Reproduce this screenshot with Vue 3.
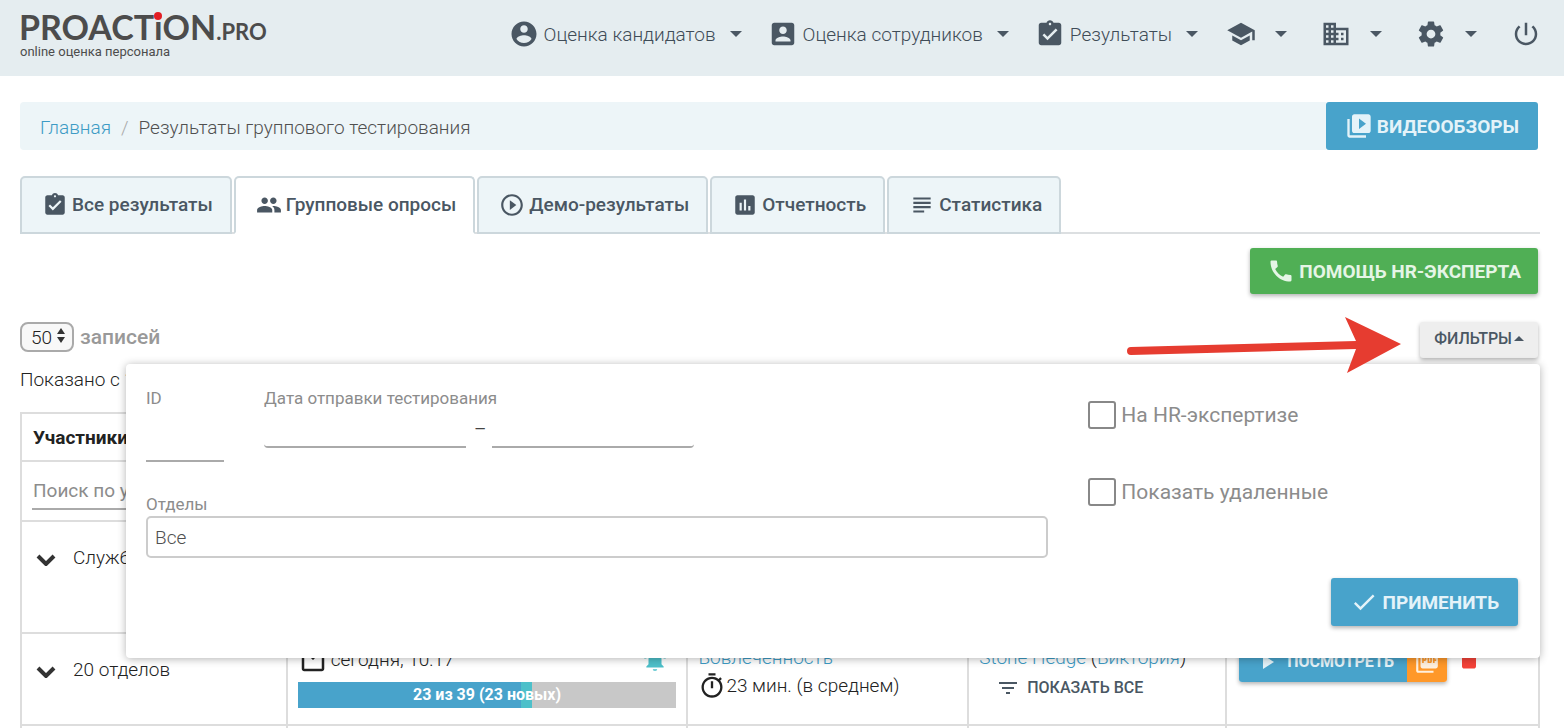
<script setup>
import { ref } from 'vue'

const icons = {
  accountCircle: 'M12 2C6.48 2 2 6.48 2 12s4.48 10 10 10 10-4.48 10-10S17.52 2 12 2zm0 3c1.66 0 3 1.34 3 3s-1.34 3-3 3-3-1.34-3-3 1.34-3 3-3zm0 14.2c-2.5 0-4.71-1.28-6-3.22.03-1.99 4-3.08 6-3.08 1.99 0 5.97 1.09 6 3.08-1.29 1.94-3.5 3.22-6 3.22z',
  accountBox: 'M3 5v14c0 1.1.89 2 2 2h14c1.1 0 2-.9 2-2V5c0-1.1-.9-2-2-2H5c-1.11 0-2 .9-2 2zm12 4c0 1.66-1.34 3-3 3s-3-1.34-3-3 1.34-3 3-3 3 1.34 3 3zm-9 8c0-2 4-3.1 6-3.1s6 1.1 6 3.1v1H6v-1z',
  assignment: 'M19 3h-4.18C14.4 1.84 13.3 1 12 1c-1.3 0-2.4.84-2.82 2H5c-1.1 0-2 .9-2 2v14c0 1.1.9 2 2 2h14c1.1 0 2-.9 2-2V5c0-1.1-.9-2-2-2zm-7 0c.55 0 1 .45 1 1s-.45 1-1 1-1-.45-1-1 .45-1 1-1zm-2 14l-4-4 1.41-1.41L10 14.17l6.59-6.59L18 9l-8 8z',
  school: 'M5 13.18v4L12 21l7-3.82v-4L12 17l-7-3.82zM12 3L1 9l11 6 9-4.91V17h2V9L12 3z',
  business: 'M12 7V3H2v18h20V7H12zM6 19H4v-2h2v2zm0-4H4v-2h2v2zm0-4H4V9h2v2zm0-4H4V5h2v2zm4 12H8v-2h2v2zm0-4H8v-2h2v2zm0-4H8V9h2v2zm0-4H8V5h2v2zm10 12h-8v-2h2v-2h-2v-2h2v-2h-2V9h8v10zm-2-8h-2v2h2v-2zm0 4h-2v2h2v-2z',
  settings: 'M19.43 12.98c.04-.32.07-.64.07-.98s-.03-.66-.07-.98l2.11-1.65c.19-.15.24-.42.12-.64l-2-3.46c-.12-.22-.39-.3-.61-.22l-2.49 1c-.52-.4-1.08-.73-1.69-.98l-.38-2.65C14.46 2.18 14.25 2 14 2h-4c-.25 0-.46.18-.49.42l-.38 2.65c-.61.25-1.17.59-1.69.98l-2.49-1c-.23-.09-.49 0-.61.22l-2 3.46c-.13.22-.07.49.12.64l2.11 1.65c-.04.32-.07.65-.07.98s.03.66.07.98l-2.11 1.65c-.19.15-.24.42-.12.64l2 3.46c.12.22.39.3.61.22l2.49-1c.52.4 1.08.73 1.69.98l.38 2.65c.03.24.24.42.49.42h4c.25 0 .46-.18.49-.42l.38-2.65c.61-.25 1.17-.59 1.69-.98l2.49 1c.23.09.49 0 .61-.22l2-3.46c.12-.22.07-.49-.12-.64l-2.11-1.65zM12 15.5c-1.93 0-3.5-1.57-3.5-3.5s1.57-3.5 3.5-3.5 3.5 1.57 3.5 3.5-1.57 3.5-3.5 3.5z',
  power: 'M13 3h-2v10h2V3zm4.83 2.17l-1.42 1.42C17.99 7.86 19 9.81 19 12c0 3.87-3.13 7-7 7s-7-3.13-7-7c0-2.19 1.01-4.14 2.58-5.42L6.17 5.17C4.23 6.82 3 9.26 3 12c0 4.97 4.03 9 9 9s9-4.03 9-9c0-2.74-1.23-5.18-3.17-6.83z',
  video: 'M4 6H2v14c0 1.1.9 2 2 2h14v-2H4V6zm16-4H8c-1.1 0-2 .9-2 2v12c0 1.1.9 2 2 2h12c1.1 0 2-.9 2-2V4c0-1.1-.9-2-2-2zm-8 12.5v-9l6 4.5-6 4.5z',
  people: 'M16 11c1.66 0 2.99-1.34 2.99-3S17.66 5 16 5c-1.66 0-3 1.34-3 3s1.34 3 3 3zm-8 0c1.66 0 2.99-1.34 2.99-3S9.66 5 8 5C6.34 5 5 6.34 5 8s1.34 3 3 3zm0 2c-2.33 0-7 1.17-7 3.5V19h14v-2.5c0-2.33-4.67-3.5-7-3.5zm8 0c-.29 0-.62.02-.97.05 1.16.84 1.97 1.97 1.97 3.45V19h6v-2.5c0-2.33-4.67-3.5-7-3.5z',
  playCircle: 'M10 16.5l6-4.5-6-4.5v9zM12 2C6.48 2 2 6.48 2 12s4.48 10 10 10 10-4.48 10-10S17.52 2 12 2zm0 18c-4.41 0-8-3.59-8-8s3.59-8 8-8 8 3.59 8 8-3.59 8-8 8z',
  assessment: 'M19 3H5c-1.1 0-2 .9-2 2v14c0 1.1.9 2 2 2h14c1.1 0 2-.9 2-2V5c0-1.1-.9-2-2-2zM9 17H7v-7h2v7zm4 0h-2V7h2v10zm4 0h-2v-4h2v4z',
  subject: 'M14 17H4v2h10v-2zm6-8H4v2h16V9zM4 15h16v-2H4v2zM4 5v2h16V5H4z',
  phone: 'M20.01 15.38c-1.23 0-2.42-.2-3.53-.56-.35-.12-.74-.03-1.01.24l-1.57 1.97c-2.83-1.35-5.48-3.9-6.89-6.83l1.95-1.66c.27-.28.35-.67.24-1.02-.37-1.11-.56-2.3-.56-3.53 0-.54-.45-.99-.99-.99H4.19C3.65 3 3 3.24 3 3.99 3 13.28 10.73 21 20.01 21c.71 0 .99-.63.99-1.18v-3.45c0-.54-.45-.99-.99-.99z',
  check: 'M9 16.17L4.83 12l-1.42 1.41L9 19 21 7l-1.41-1.41z',
  calendar: 'M19 3h-1V1h-2v2H8V1H6v2H5c-1.11 0-1.99.9-1.99 2L3 19c0 1.1.89 2 2 2h14c1.1 0 2-.9 2-2V5c0-1.1-.9-2-2-2zm0 16H5V8h14v11zM10 8h4v2l-2 2-2-2z',
  bell: 'M7.58 4.08L6.15 2.65C3.75 4.48 2.17 7.3 2.03 10.5h2c.15-2.65 1.51-4.97 3.55-6.42zm12.39 6.42h2c-.15-3.2-1.73-6.02-4.12-7.85l-1.42 1.43c2.02 1.45 3.39 3.77 3.54 6.42zM18 11c0-3.07-1.64-5.64-4.5-6.32V4c0-.83-.67-1.5-1.5-1.5s-1.5.67-1.5 1.5v.68C7.63 5.36 6 7.92 6 11v5l-2 2v1h16v-1l-2-2v-5zm-8 9.5h4c0 1-.9 1.5-2 1.5s-2-.5-2-1.500z',
  timer: 'M15 1H9v2h6V1zm-4 13h2V8h-2v6zm8.03-6.61l1.42-1.42c-.43-.51-.9-.99-1.41-1.41l-1.42 1.42C16.07 4.74 14.12 4 12 4c-4.97 0-9 4.03-9 9s4.02 9 9 9 9-4.03 9-9c0-2.12-.74-4.07-1.97-5.61zM12 20c-3.87 0-7-3.13-7-7s3.13-7 7-7 7 3.13 7 7-3.13 7-7 7z',
  filter: 'M10 18h4v-2h-4v2zM3 6v2h18V6H3zm3 7h12v-2H6v2z',
  play: 'M8 5v14l11-7z',
  pdf: 'M20 2H8c-1.1 0-2 .9-2 2v12c0 1.1.9 2 2 2h12c1.1 0 2-.9 2-2V4c0-1.1-.9-2-2-2zm-8.5 7.5c0 .83-.67 1.5-1.5 1.5H9v2H7.5V7H10c.83 0 1.5.67 1.5 1.5v1zm5 2c0 .83-.67 1.5-1.5 1.5h-2.5V7H15c.83 0 1.5.67 1.5 1.5v3zm4-3H19v1h1.5V11H19v2h-1.5V7h3v1.5zM9 9.5h1v-1H9v1zM4 6H2v14c0 1.1.9 2 2 2h14v-2H4V6zm10 5.5h1v-3h-1v3z',
  trash: 'M6 19c0 1.1.9 2 2 2h8c1.1 0 2-.9 2-2V7H6v12zM19 4h-3.5l-1-1h-5l-1 1H5v2h14V4z',
}

const nav = [
  { icon: 'accountCircle', text: 'Оценка кандидатов', label: 'Оценка кандидатов' },
  { icon: 'accountBox', text: 'Оценка сотрудников', label: 'Оценка сотрудников' },
  { icon: 'assignment', text: 'Результаты', label: 'Результаты' },
  { icon: 'school', label: 'Обучение' },
  { icon: 'business', label: 'Компания' },
  { icon: 'settings', label: 'Настройки' },
]

const tabs = [
  { icon: 'assignment', text: 'Все результаты' },
  { icon: 'people', text: 'Групповые опросы' },
  { icon: 'playCircle', text: 'Демо-результаты' },
  { icon: 'assessment', text: 'Отчетность' },
  { icon: 'subject', text: 'Статистика' },
]
const activeTab = ref(1)

const progress = { done: 59, fresh: 3 }
const filtersOpen = ref(true)
const pageSize = ref('50')
</script>

<template>
  <div class="page">
    <header class="header">
      <a class="logo" href="#" aria-label="PROACTION.PRO">
        <span class="logo-name">PROACT<span class="logo-i">ı</span>ON<small>.PRO</small></span>
        <span class="logo-sub">online оценка персонала</span>
      </a>
      <nav class="nav">
        <a v-for="item in nav" :key="item.icon" href="#" class="nav-item" :class="{ compact: !item.text }" :aria-label="item.label">
          <svg class="nav-icon" viewBox="0 0 24 24"><path :d="icons[item.icon]" /></svg>
          <span v-if="item.text" class="nav-text">{{ item.text }}</span>
          <svg class="caret" viewBox="0 0 12 6"><path d="M0 0h12L6 6z" /></svg>
        </a>
        <a href="#" class="nav-item compact" aria-label="Выход">
          <svg class="nav-icon" viewBox="0 0 24 24"><path :d="icons.power" /></svg>
        </a>
      </nav>
    </header>

    <main class="main">
      <div class="crumb-row">
        <nav class="crumbs">
          <a href="#">Главная</a><span class="slash">/</span><span>Результаты группового тестирования</span>
        </nav>
        <button type="button" class="btn blue video">
          <svg viewBox="0 0 24 24"><path :d="icons.video" /></svg><span>Видеообзоры</span>
        </button>
      </div>

      <div class="tabs" role="tablist">
        <button
          v-for="(tab, i) in tabs" :key="tab.text" type="button" role="tab" class="tab"
          :class="{ active: i === activeTab }" :aria-selected="i === activeTab" @click="activeTab = i"
        >
          <svg viewBox="0 0 24 24"><path :d="icons[tab.icon]" /></svg>{{ tab.text }}
        </button>
      </div>

      <div class="help-row">
        <button type="button" class="btn green raised">
          <svg viewBox="0 0 24 24"><path :d="icons.phone" /></svg><span>Помощь HR-эксперта</span>
        </button>
      </div>

      <div class="toolbar">
        <label class="length">
          <span class="select-wrap">
            <select v-model="pageSize"><option>50</option></select>
            <svg viewBox="0 0 8 16"><path d="M4 0l4 6H0zM0 9h8l-4 6z" /></svg>
          </span>
          записей
        </label>
        <button type="button" class="filters-btn raised" :aria-expanded="filtersOpen" @click="filtersOpen = !filtersOpen">
          Фильтры<svg viewBox="0 0 12 6"><path d="M0 6h12L6 0z" /></svg>
        </button>

        <svg class="pointer" viewBox="0 0 276 58" aria-hidden="true">
          <path d="M5 30L230 24L219 0L275 27L221 56L230 32L5 38A4 4 0 0 1 5 30z" />
        </svg>

        <form v-if="filtersOpen" class="panel" @submit.prevent>
          <div class="fields">
            <div class="top-fields">
              <div class="field id-field">
                <label for="f-id">ID</label>
                <input id="f-id" type="text">
              </div>
              <div class="field date-field">
                <label for="f-from">Дата отправки тестирования</label>
                <div class="range">
                  <input id="f-from" class="from" type="text">
                  <span>–</span>
                  <input class="to" type="text" aria-label="Дата отправки тестирования, по">
                </div>
              </div>
            </div>
            <div class="field">
              <label for="f-dep">Отделы</label>
              <input id="f-dep" class="box" type="text" placeholder="Все">
            </div>
          </div>
          <div class="side">
            <label class="check"><input type="checkbox">На HR-экспертизе</label>
            <label class="check"><input type="checkbox">Показать удаленные</label>
            <button type="submit" class="btn blue raised apply">
              <svg viewBox="0 0 24 24"><path :d="icons.check" /></svg><span>Применить</span>
            </button>
          </div>
        </form>
      </div>

      <p class="info">Показано с 1</p>

      <table class="grid">
        <colgroup><col class="c1"><col class="c2"><col class="c3"><col class="c4"><col class="c5"></colgroup>
        <thead>
          <tr class="r-head"><th>Участники</th><th /><th /><th /><th /></tr>
          <tr class="r-search">
            <td><input class="search" type="text" placeholder="Поиск по участникам" aria-label="Поиск по участникам"></td>
            <td /><td /><td /><td />
          </tr>
        </thead>
        <tbody>
          <tr class="r-first">
            <td><div class="who"><svg viewBox="0 0 20 12"><path d="M2 2l8 8 8-8" /></svg>Служба</div></td>
            <td /><td /><td /><td />
          </tr>
          <tr class="r-second">
            <td><div class="who"><svg viewBox="0 0 20 12"><path d="M2 2l8 8 8-8" /></svg>20 отделов</div></td>
            <td>
              <div class="when">
                <svg class="i30" viewBox="0 0 24 24"><path :d="icons.calendar" /></svg>
                <span>сегодня, 10:17</span>
                <svg class="bell" viewBox="0 0 24 24"><path :d="icons.bell" /></svg>
              </div>
              <div class="bar">
                <div class="done" :style="{ width: progress.done + '%' }" />
                <div class="fresh" :style="{ width: progress.fresh + '%' }" />
                <span class="bar-text">23 из 39 (23 новых)</span>
              </div>
            </td>
            <td>
              <div class="line"><a href="#">Вовлеченность</a></div>
              <div class="line time"><svg viewBox="0 0 24 24"><path :d="icons.timer" /></svg>23 мин. (в среднем)</div>
            </td>
            <td>
              <div class="line"><a href="#">Stone Hedge</a> (<a href="#">Виктория</a>)</div>
              <button type="button" class="show-all"><svg viewBox="0 0 24 24"><path :d="icons.filter" /></svg>Показать все</button>
            </td>
            <td>
              <div class="actions">
                <div class="group raised">
                  <button type="button" class="view"><svg viewBox="0 0 24 24"><path :d="icons.play" /></svg>Посмотреть</button>
                  <button type="button" class="pdf" aria-label="PDF"><svg viewBox="0 0 24 24"><path :d="icons.pdf" /></svg></button>
                </div>
                <button type="button" class="del" aria-label="Удалить"><svg viewBox="0 0 24 24"><path :d="icons.trash" /></svg></button>
              </div>
            </td>
          </tr>
          <tr class="r-second"><td /><td /><td /><td /><td /></tr>
        </tbody>
      </table>
    </main>
  </div>
</template>

<style>
body { background: #fff; }
</style>

<style scoped>
* { box-sizing: border-box; }
.page {
  height: 100vh; overflow: hidden; color: #222; background: #fff;
  font-family: Roboto, "Noto Sans", sans-serif; font-size: 19px; font-weight: 300; line-height: 28px;
}
svg { display: block; flex: none; fill: currentColor; }
a { color: #3d9bc5; text-decoration: none; }
button, input, select { font: inherit; margin: 0; }
button { border: 0; cursor: pointer; }

.header {
  display: flex; justify-content: space-between; align-items: flex-start;
  height: 76px; padding: 0 23px 0 19px; background: #e5edf0;
}
.logo { display: flex; flex-direction: column; padding-top: 12px; color: #4c4c4c; font-family: Lato, sans-serif; }
.logo-name { font-size: 34px; font-weight: 700; line-height: 30px; white-space: nowrap; }
.logo-name small { font-size: 22px; }
.logo-i { position: relative; }
.logo-i::before {
  content: ""; position: absolute; left: 0; top: 6px; width: 8px; height: 8px; border-radius: 50%; background: #e31e24;
}
.logo-sub { padding-left: 1px; font: 400 13px/10px Roboto, sans-serif; }
.nav { display: flex; gap: 26px; padding-top: 19px; }
.nav-item { display: flex; align-items: center; height: 30px; color: #3f4c57; }
.nav-item.compact { margin-left: 2px; }
.nav-item.compact + .compact { margin-left: 8px; }
.nav-icon { width: 30px; height: 30px; color: #4a5763; }
.nav-text { padding: 2px 0 0 5px; white-space: nowrap; }
.caret { width: 12px; height: 6px; margin-left: 14px; color: #4a5763; }
.compact .caret { margin-left: 19px; }

.main { padding: 26px 24px 0 20px; }
.crumb-row { display: flex; margin-right: 2px; }
.crumbs {
  flex: 1; display: flex; align-items: center; height: 48px; padding: 4px 20px 0;
  border-radius: 4px 0 0 4px; background: #edf5f8; color: #505050;
}
.slash { padding: 0 10px; color: #aaa; }
.btn {
  display: flex; align-items: center; gap: 4px; height: 48px; padding: 0 19px; border-radius: 3px;
  color: #e4f3f9; font-weight: 700; text-transform: uppercase; white-space: nowrap;
}
.btn svg { width: 28px; height: 28px; }
.btn span { padding-top: 2px; }
.blue { background: #48a3cb; }
.green { height: 46px; background: #50af55; color: #e5f5e6; }
.green { padding: 0 17px; }
.raised { box-shadow: 0 2px 4px rgba(0, 0, 0, .3); }

.tabs { display: flex; gap: 2px; margin-top: 26px; box-shadow: inset 0 -2px #dcdfe1; }
.tab {
  display: flex; align-items: center; gap: 4px; height: 58px; padding: 0 17px 0 20px;
  border: 2px solid #ccd7dc; border-radius: 5px 5px 0 0; background: #edf5f8;
  color: #4a5763; font-weight: 500; white-space: nowrap;
}
.tab svg { width: 26px; height: 26px; }
.tab.active { background: #fff; border-bottom-color: #fff; }

.help-row { display: flex; justify-content: flex-end; margin: 14px 2px 0 0; }
.toolbar { position: relative; display: flex; justify-content: space-between; margin-top: 28px; height: 36px; }
.length { display: flex; align-items: center; gap: 6px; height: 30px; color: #999; font-size: 21px; font-weight: 500; }
.select-wrap { position: relative; display: block; }
.select-wrap select {
  display: block; width: 54px; height: 30px; padding: 0 0 0 9px; appearance: none;
  border: 2px solid #aaa; border-radius: 8px; background: #f8f8f8; color: #222; font-size: 19px; font-weight: 300;
}
.select-wrap svg { position: absolute; right: 9px; top: 6px; width: 8px; height: 16px; color: #333; pointer-events: none; }
.filters-btn {
  display: flex; align-items: center; justify-content: center; gap: 2px; height: 36px; margin-right: 2px; padding: 0 14px 3px;
  border-radius: 3px; background: #eee; color: #4a5763; font-size: 16px; font-weight: 500; text-transform: uppercase;
}
.filters-btn svg { width: 10px; height: 5px; }
.pointer { position: absolute; right: 138px; top: -5px; z-index: 3; width: 276px; height: 58px; color: #e63c30; pointer-events: none; }

.panel {
  position: absolute; z-index: 2; left: 106px; right: 0; top: 42px;
  display: flex; gap: 40px; height: 294px; padding: 24px 22px 32px 20px;
  border-radius: 4px; background: #fff; box-shadow: 0 1px 8px rgba(0, 0, 0, .3);
}
.fields { flex: 21; display: flex; flex-direction: column; gap: 32px; }
.top-fields { display: flex; gap: 40px; }
.field { display: flex; flex-direction: column; color: #8c8c8c; }
.field label { font-size: 17px; line-height: 20px; font-weight: 400; }
.field input { border: 0; border-bottom: 2px solid #aaa; outline: 0; background: transparent; color: #444; }
.id-field input { width: 78px; height: 54px; }
.range { display: flex; gap: 8px; color: #444; font-weight: 400; }
.range input { width: 202px; height: 40px; }
.range .from { border-bottom-left-radius: 4px; }
.range .to { border-bottom-right-radius: 4px; }
.range span { width: 10px; text-align: center; line-height: 42px; }
.field .box { width: 100%; height: 42px; margin-top: 2px; padding: 0 7px; border: 2px solid #ccc; border-radius: 5px; }
.box::placeholder { color: #505050; opacity: 1; }
.side { flex: 10; display: flex; flex-direction: column; align-items: flex-start; }
.check { display: flex; align-items: center; gap: 5px; height: 28px; margin: 13px 0 36px; color: #8c8c8c; font-size: 21px; font-weight: 400; white-space: nowrap; }
.check input { appearance: none; width: 28px; height: 28px; margin: 0; border: 2px solid #888; border-radius: 3px; background: #fff; }
.apply { align-self: flex-end; margin-top: auto; }

.info { margin: 8px 0 18px; }
.grid { width: 100%; table-layout: fixed; border-collapse: collapse; }
.c1 { width: 17.5%; } .c2 { width: 26.4%; } .c3 { width: 18.5%; } .c4 { width: 17%; } .c5 { width: 20.6%; }
th, td { padding: 0 10px; border: 2px solid #ddd; text-align: left; vertical-align: top; }
th { padding: 2px 11px 0; font-size: 19px; font-weight: 700; vertical-align: middle; }
.r-head { height: 48px; }
.r-search { height: 60px; }
.r-first { height: 112px; }
.r-second { height: 92px; }
.search { display: block; width: 100%; height: 40px; margin-top: 8px; padding: 3px 1px 0; border: 0; border-bottom: 2px solid #aaa; outline: 0; background: transparent; }
.search::placeholder { color: #8c8c8c; opacity: 1; font-weight: 400; font-size: 19px; }
.who { display: flex; align-items: center; gap: 17px; padding: 22px 4px 0; }
.who svg { width: 20px; height: 12px; margin-top: 4px; fill: none; stroke: #333; stroke-width: 4; }
.when { display: flex; align-items: center; height: 28px; margin-top: 12px; gap: 3px; }
.i30 { width: 30px; height: 30px; }
.bell { width: 26px; height: 26px; margin-left: auto; margin-right: 8px; color: #4dc0ca; }
.bar { position: relative; display: flex; height: 26px; margin-top: 8px; background: #c8c8c8; }
.done { background: #48a3cb; }
.fresh { background: #4dc0ca; }
.bar-text { position: absolute; inset: 0; text-align: center; color: #fff; font-size: 16px; line-height: 26px; font-weight: 700; }
.line { white-space: nowrap; }
td > .line:first-child { padding-top: 10px; }
.time { display: flex; align-items: center; }
.time svg { width: 28px; height: 28px; }
.show-all {
  display: flex; align-items: center; gap: 7px; margin: 4px 0 0 17px; padding: 0; background: transparent;
  color: #4a5763; font-size: 16px; line-height: 24px; font-weight: 500; text-transform: uppercase; white-space: nowrap;
}
.show-all svg { width: 24px; height: 24px; }
.actions { display: flex; align-items: flex-start; gap: 8px; padding: 8px 2px 0; }
.group { display: flex; border-radius: 3px; overflow: hidden; }
.view {
  display: flex; align-items: center; gap: 8px; height: 40px; padding: 0 13px 0 16px; background: #48a3cb;
  color: #e4f3f9; font-size: 16px; font-weight: 700; text-transform: uppercase;
}
.view svg { width: 24px; height: 24px; }
.pdf { display: flex; align-items: center; padding: 0 7px; background: #ff9829; color: #fff0de; }
.pdf svg { width: 26px; height: 26px; }
.del { padding: 2px 0 0; background: transparent; color: #f44238; }
.del svg { width: 28px; height: 28px; }
</style>
